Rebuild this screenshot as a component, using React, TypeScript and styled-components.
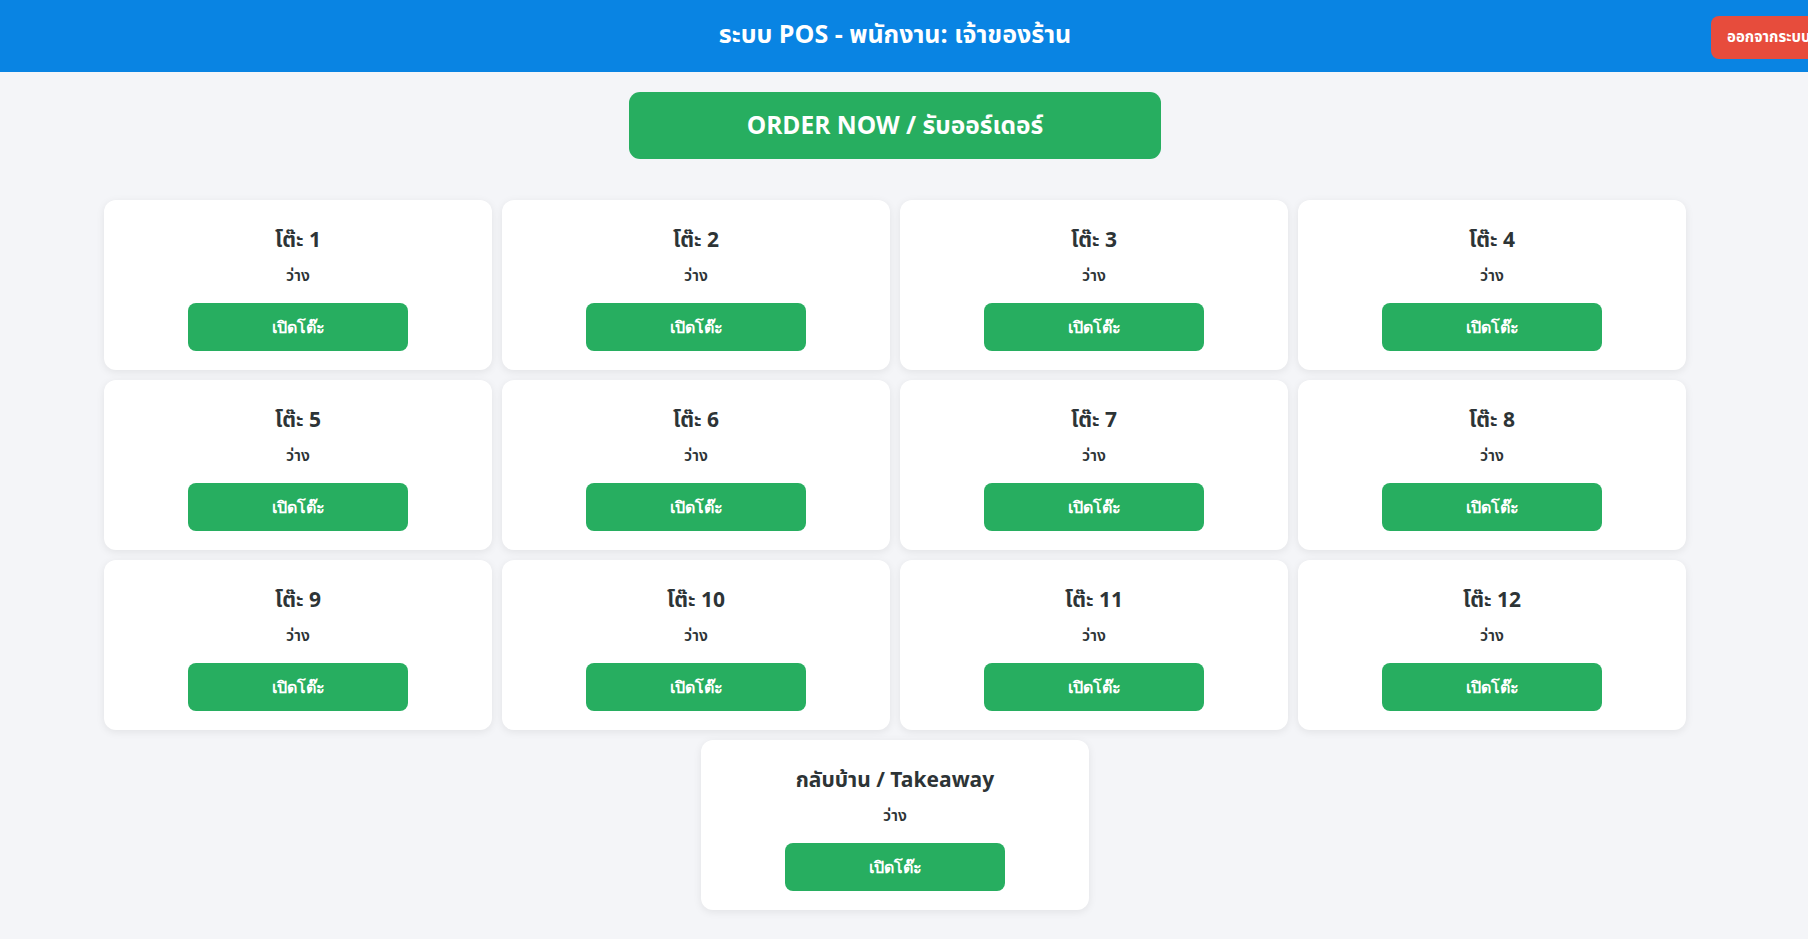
import React from "react";
import styled, { createGlobalStyle } from "styled-components";

const GlobalStyle = createGlobalStyle`
  html, body {
    margin: 0;
    padding: 0;
    background: #f4f5f8;
    overflow-x: hidden;
  }
  body {
    font-family: "Noto Sans Thai", "Noto Sans", "Loma", "Garuda", sans-serif;
    color: #2d3436;
  }
  * { box-sizing: border-box; }
`;

const Header = styled.header`
  position: relative;
  height: 72px;
  background: #0984e3;
  display: flex;
  align-items: center;
  justify-content: center;
  padding-right: 18px;
  padding-bottom: 2px;
`;

const Title = styled.h1`
  margin: 0;
  color: #ffffff;
  font-size: 25px;
  font-weight: 700;
`;

const LogoutButton = styled.button`
  position: absolute;
  top: 16px;
  left: calc(100% - 97px);
  height: 43px;
  padding: 0 16px;
  border: none;
  border-radius: 8px;
  background: #e74c3c;
  color: #ffffff;
  font-family: inherit;
  font-size: 15px;
  font-weight: 700;
  white-space: nowrap;
  cursor: pointer;
`;

const Main = styled.main`
  display: flex;
  flex-direction: column;
  align-items: center;
  padding: 20px 18px 30px 0;
`;

const OrderButton = styled.button`
  width: 532px;
  height: 67px;
  padding-top: 2px;
  border: none;
  border-radius: 11px;
  background: #27ae60;
  color: #ffffff;
  font-family: inherit;
  font-size: 24.5px;
  font-weight: 700;
  cursor: pointer;
`;

const TableGrid = styled.div`
  margin-top: 41px;
  width: 1582px;
  display: flex;
  flex-wrap: wrap;
  justify-content: center;
  gap: 10px;
`;

const Card = styled.div`
  width: 388px;
  height: 170px;
  background: #ffffff;
  border-radius: 12px;
  box-shadow: 0 2px 8px rgba(0, 0, 0, 0.08);
  display: flex;
  flex-direction: column;
  align-items: center;
  padding-top: 26px;
`;

const CardTitle = styled.h3`
  margin: 0;
  font-size: 21px;
  font-weight: 700;
  color: #2d3436;
  line-height: 30px;
`;

const Status = styled.p`
  margin: 9px 0 0;
  font-size: 16px;
  font-weight: 600;
  color: #2d3436;
  line-height: 22px;
`;

const OpenButton = styled.button`
  margin-top: 16px;
  width: 220px;
  height: 48px;
  border: none;
  border-radius: 8px;
  background: #27ae60;
  color: #ffffff;
  font-size: 16px;
  font-weight: 700;
  cursor: pointer;
`;

const tables = [
  "โต๊ะ 1", "โต๊ะ 2", "โต๊ะ 3", "โต๊ะ 4",
  "โต๊ะ 5", "โต๊ะ 6", "โต๊ะ 7", "โต๊ะ 8",
  "โต๊ะ 9", "โต๊ะ 10", "โต๊ะ 11", "โต๊ะ 12",
  "กลับบ้าน / Takeaway",
];

export default function App() {
  return (
    <>
      <GlobalStyle />
      <Header>
        <Title>ระบบ POS - พนักงาน: เจ้าของร้าน</Title>
        <LogoutButton>ออกจากระบบ</LogoutButton>
      </Header>
      <Main>
        <OrderButton>ORDER NOW / รับออร์เดอร์</OrderButton>
        <TableGrid>
          {tables.map((name) => (
            <Card key={name}>
              <CardTitle>{name}</CardTitle>
              <Status>ว่าง</Status>
              <OpenButton>เปิดโต๊ะ</OpenButton>
            </Card>
          ))}
        </TableGrid>
      </Main>
    </>
  );
}
